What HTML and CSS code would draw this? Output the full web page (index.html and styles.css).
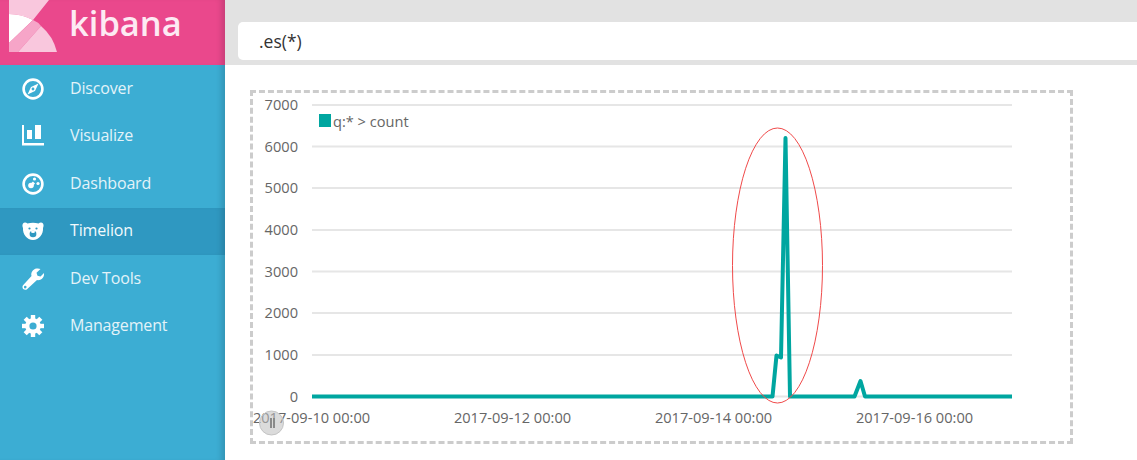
FILE: index.html
```html
<!DOCTYPE html>
<html lang="en">
<head>
<meta charset="utf-8">
<title>Kibana Timelion</title>
<link rel="stylesheet" href="styles.css">
</head>
<body>
<div class="app">
  <aside class="sidebar">
    <header class="brand">
      <svg class="brand-logo" width="57" height="52" viewBox="0 0 57 52">
        <path class="logo-pale" d="M9 0H49L33 20Q22 14 9 14Z"/>
        <path class="logo-white" d="M9 14Q22 14 33 20L9 43Z"/>
        <path class="logo-mid" d="M9 43L33 20Q38 22 41 26L18 52H9Z"/>
        <path class="logo-pale" d="M18 52L41 26Q53 36 57 52Z"/>
      </svg>
      <span class="brand-name">kibana</span>
    </header>
    <nav class="nav">
      <a class="nav-item">
        <svg class="nav-icon" width="22" height="22" viewBox="0 0 22 22"><circle class="icon-ring" cx="11" cy="11" r="9.4"/><path class="icon-fill" fill-rule="evenodd" d="M16.5 5.5L13 13 5.5 16.5 9 9ZM11 9.6a1.4 1.4 0 1 0 0 2.8 1.4 1.4 0 0 0 0-2.8Z"/></svg>
        <span>Discover</span>
      </a>
      <a class="nav-item">
        <svg class="nav-icon" width="22" height="22" viewBox="0 0 22 22"><path class="icon-fill" d="M0 0H2V18H22V20.500H0ZM5 5H10V14H5ZM13 0H19V14H13Z"/></svg>
        <span>Visualize</span>
      </a>
      <a class="nav-item">
        <svg class="nav-icon" width="22" height="22" viewBox="0 0 22 22"><circle class="icon-ring" cx="11" cy="11" r="9.4"/><circle class="icon-fill" cx="9" cy="12.500" r="2.800"/><path class="icon-line" d="M9 12.500L12 9.500"/><circle class="icon-fill" cx="12.500" cy="6" r="1.600"/><circle class="icon-fill" cx="16" cy="10.500" r="1.600"/></svg>
        <span>Dashboard</span>
      </a>
      <a class="nav-item is-active">
        <svg class="nav-icon" width="22" height="22" viewBox="0 0 22 22"><path class="icon-fill" d="M1 3.500C2 2 4 2 5.500 3.500Q11 2 16.500 3.500C18 2 20 2 21 3.500 22 5 21.500 6.500 21 8 21.500 14 17 20 11 20 5 20 0.500 14 1 8 0.500 6.500 0 5 1 3.500Z"/><circle class="icon-hole" cx="7.500" cy="8.500" r="1.100"/><circle class="icon-hole" cx="14.500" cy="8.500" r="1.100"/><ellipse class="icon-hole" cx="11" cy="14" rx="3.400" ry="3.200"/><ellipse class="icon-fill" cx="11" cy="11.800" rx="2" ry="1.200"/></svg>
        <span>Timelion</span>
      </a>
      <a class="nav-item">
        <svg class="nav-icon" width="22" height="22" viewBox="0 0 22 22"><path class="icon-fill" fill-rule="evenodd" d="M14.500 0.500C16 0.200 17.500 0.500 18.500 1L14.500 4.800 15.500 7.800 18.500 8.500 22 5C22.500 8.500 20.500 12 16 12.200L15 12 5 21.200C3.500 22.500 0 21.500 0.500 18.500 0.600 17.800 1 17.300 1.500 16.800L9.500 8C8.500 4.500 11 1 14.500 0.500ZM3.200 17.800a1.300 1.300 0 1 0 0.100 2.600 1.300 1.300 0 0 0-0.100-2.600Z"/></svg>
        <span>Dev Tools</span>
      </a>
      <a class="nav-item">
        <svg class="nav-icon" width="22" height="22" viewBox="0 0 22 22"><g class="gear-teeth"><path d="M11 0V22"/><path d="M0 11H22"/><path d="M3.200 3.200L18.800 18.800"/><path d="M18.800 3.200L3.200 18.800"/></g><circle class="icon-fill" cx="11" cy="11" r="7.800"/><circle class="icon-hole" cx="11" cy="11" r="3.600"/></svg>
        <span>Management</span>
      </a>
    </nav>
  </aside>
  <main class="main">
    <div class="query-bar">
      <div class="query-input">.es(*)</div>
    </div>
    <section class="chart-box">
      <svg class="chart" width="817" height="348" viewBox="253 93 817 348">
        <g class="grid">
          <path d="M312 105H1012"/>
          <path d="M312 146.500H1012"/>
          <path d="M312 188H1012"/>
          <path d="M312 230H1012"/>
          <path d="M312 271.500H1012"/>
          <path d="M312 313H1012"/>
          <path d="M312 355H1012"/>
          <path d="M312 396.500H1012"/>
        </g>
        <g class="y-labels">
          <text x="298" y="110">7000</text>
          <text x="298" y="152">6000</text>
          <text x="298" y="193">5000</text>
          <text x="298" y="235">4000</text>
          <text x="298" y="277">3000</text>
          <text x="298" y="318">2000</text>
          <text x="298" y="360">1000</text>
          <text x="298" y="402">0</text>
        </g>
        <g class="x-labels">
          <text x="311.500" y="423">2017-09-10 00:00</text>
          <text x="512.500" y="423">2017-09-12 00:00</text>
          <text x="713.500" y="423">2017-09-14 00:00</text>
          <text x="914.500" y="423">2017-09-16 00:00</text>
        </g>
        <rect class="legend-swatch" x="319" y="114" width="12" height="13"/>
        <text class="legend-text" x="333" y="127">q:* &gt; count</text>
        <polyline class="series" points="312,396.500 772.500,396.500 776.500,355.500 781,357.500 785.500,138 790,396.500 854.500,396.500 860.500,381 865,396.500 1012,396.500"/>
        <ellipse class="annotation" cx="777.500" cy="265.500" rx="45" ry="137.500"/>
        <circle class="cursor" cx="271.500" cy="423" r="12"/>
        <path class="cursor-mark" d="M271 418V428M274 418V428"/>
      </svg>
    </section>
  </main>
</div>
</body>
</html>
```
FILE: styles.css
```css
* {
  box-sizing: border-box;
}

html,
body {
  margin: 0;
  height: 100%;
  background: #fff;
  overflow: hidden;
}

body {
  font-family: "Open Sans", "Liberation Sans", sans-serif;
}

.app {
  display: flex;
  height: 460px;
}

.sidebar {
  flex: 0 0 225px;
  display: flex;
  flex-direction: column;
  background: #3cadd3;
  box-shadow: inset -7px 0 6px -4px rgba(0, 0, 0, 0.16);
}

.brand {
  height: 65px;
  flex: none;
  display: flex;
  align-items: flex-start;
  background: #ea488c;
  box-shadow: inset -7px 0 6px -4px rgba(0, 0, 0, 0.16);
}

.brand-logo {
  flex: none;
}

.brand-name {
  margin: 0 0 0 12px;
  font-size: 34.5px;
  line-height: 46px;
  font-weight: 600;
  color: #fdeaf3;
}

.logo-pale {
  fill: #f9c7dd;
}

.logo-white {
  fill: #fff;
}

.logo-mid {
  fill: #f6a5c8;
}

.nav {
  display: flex;
  flex-direction: column;
}

.nav-item {
  height: 47.5px;
  display: flex;
  align-items: center;
  gap: 26px;
  padding-left: 22px;
  font-size: 16px;
  color: #e3f3f9;
}

.nav-item span {
  margin-top: -2px;
  letter-spacing: -0.01em;
}

.nav-item.is-active {
  background: #2f98c1;
  color: #f2fafd;
  box-shadow: inset -7px 0 6px -4px rgba(0, 0, 0, 0.16);
}

.nav-icon {
  flex: none;
  overflow: visible;
}

.icon-ring {
  fill: none;
  stroke: #fff;
  stroke-width: 2.6;
}

.icon-fill {
  fill: #fff;
}

.icon-line {
  fill: none;
  stroke: #fff;
  stroke-width: 3;
}

.icon-hole {
  fill: #2f98c1;
}

.nav-item:not(.is-active) .icon-hole {
  fill: #3cadd3;
}

.gear-teeth {
  fill: none;
  stroke: #fff;
  stroke-width: 4.4;
}

.main {
  flex: 1;
  min-width: 0;
}

.query-bar {
  height: 65px;
  padding: 22px 0 5px 13px;
  background: #e2e2e2;
}

.query-input {
  height: 38px;
  padding-left: 21px;
  border-radius: 5px 0 0 5px;
  background: #fff;
  font-size: 17.5px;
  line-height: 38px;
  color: #333;
}

.chart-box {
  width: 823px;
  height: 354px;
  margin: 25px 0 0 25px;
  border: 3px dashed #ccc;
}

.chart {
  display: block;
}

.grid path {
  fill: none;
  stroke: #e6e6e6;
  stroke-width: 2;
}

.y-labels text {
  font-size: 14.6px;
  fill: #666;
  text-anchor: end;
}

.x-labels text {
  font-size: 14.6px;
  fill: #666;
  text-anchor: middle;
}

.legend-swatch {
  fill: #00a6a0;
}

.legend-text {
  font-size: 14.6px;
  fill: #666;
}

.series {
  fill: none;
  stroke: #00a6a0;
  stroke-width: 4;
  stroke-linejoin: round;
}

.annotation {
  fill: none;
  stroke: #f04a4a;
  stroke-width: 1;
}

.cursor {
  fill: rgba(190, 190, 190, 0.55);
  stroke: #c4c4c4;
  stroke-width: 1;
}

.cursor-mark {
  fill: none;
  stroke: #8a8a8a;
  stroke-width: 2;
}
```
